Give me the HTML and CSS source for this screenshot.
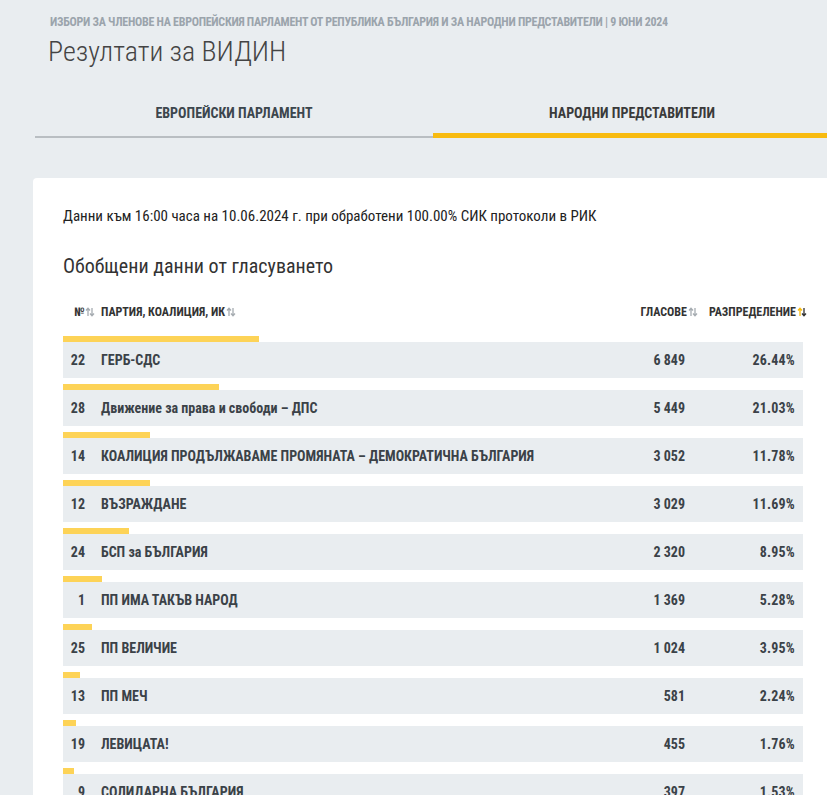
FILE: index.html
```html
<!DOCTYPE html>
<html lang="bg">
<head>
<meta charset="utf-8">
<title>Резултати за ВИДИН</title>
<link rel="stylesheet" href="styles.css">
</head>
<body>
<div class="page">
  <header class="head">
    <div class="sup">ИЗБОРИ ЗА ЧЛЕНОВЕ НА ЕВРОПЕЙСКИЯ ПАРЛАМЕНТ ОТ РЕПУБЛИКА БЪЛГАРИЯ И ЗА НАРОДНИ ПРЕДСТАВИТЕЛИ | 9 ЮНИ 2024</div>
    <h1 class="title">Резултати за ВИДИН</h1>
  </header>
  <nav class="tabs">
    <div class="tab">ЕВРОПЕЙСКИ ПАРЛАМЕНТ</div>
    <div class="tab active">НАРОДНИ ПРЕДСТАВИТЕЛИ</div>
  </nav>
  <section class="card">
    <p class="info">Данни към 16:00 часа на 10.06.2024 г. при обработени 100.00% СИК протоколи в РИК</p>
    <h2 class="sub">Обобщени данни от гласуването</h2>
    <div class="thead">
      <div class="th num">№<svg class="sort" viewBox="0 0 10 10"><path d="M3 9V1.5M1 3.5L3 1.2L5 3.5" class="up"/><path d="M7 1V8.5M5 6.5L7 8.8L9 6.5" class="dn"/></svg></div>
      <div class="th name">ПАРТИЯ, КОАЛИЦИЯ, ИК<svg class="sort" viewBox="0 0 10 10"><path d="M3 9V1.5M1 3.5L3 1.2L5 3.5" class="up"/><path d="M7 1V8.5M5 6.5L7 8.8L9 6.5" class="dn"/></svg></div>
      <div class="th votes">ГЛАСОВЕ<svg class="sort" viewBox="0 0 10 10"><path d="M3 9V1.5M1 3.5L3 1.2L5 3.5" class="up"/><path d="M7 1V8.5M5 6.5L7 8.8L9 6.5" class="dn"/></svg></div>
      <div class="th pct">РАЗПРЕДЕЛЕНИЕ<svg class="sort on" viewBox="0 0 10 10"><path d="M3 9V1.5M1 3.5L3 1.2L5 3.5" class="up"/><path d="M7 1V8.5M5 6.5L7 8.8L9 6.5" class="dn"/></svg></div>
    </div>
    <div class="rows">
      <div class="item"><div class="bar" style="width:26.44%"></div><div class="row"><span class="c-num">22</span><span class="c-name">ГЕРБ-СДС</span><span class="c-votes">6 849</span><span class="c-pct">26.44%</span></div></div>
      <div class="item"><div class="bar" style="width:21.03%"></div><div class="row"><span class="c-num">28</span><span class="c-name">Движение за права и свободи – ДПС</span><span class="c-votes">5 449</span><span class="c-pct">21.03%</span></div></div>
      <div class="item"><div class="bar" style="width:11.78%"></div><div class="row"><span class="c-num">14</span><span class="c-name">КОАЛИЦИЯ ПРОДЪЛЖАВАМЕ ПРОМЯНАТА – ДЕМОКРАТИЧНА БЪЛГАРИЯ</span><span class="c-votes">3 052</span><span class="c-pct">11.78%</span></div></div>
      <div class="item"><div class="bar" style="width:11.69%"></div><div class="row"><span class="c-num">12</span><span class="c-name">ВЪЗРАЖДАНЕ</span><span class="c-votes">3 029</span><span class="c-pct">11.69%</span></div></div>
      <div class="item"><div class="bar" style="width:8.95%"></div><div class="row"><span class="c-num">24</span><span class="c-name">БСП за БЪЛГАРИЯ</span><span class="c-votes">2 320</span><span class="c-pct">8.95%</span></div></div>
      <div class="item"><div class="bar" style="width:5.28%"></div><div class="row"><span class="c-num">1</span><span class="c-name">ПП ИМА ТАКЪВ НАРОД</span><span class="c-votes">1 369</span><span class="c-pct">5.28%</span></div></div>
      <div class="item"><div class="bar" style="width:3.95%"></div><div class="row"><span class="c-num">25</span><span class="c-name">ПП ВЕЛИЧИЕ</span><span class="c-votes">1 024</span><span class="c-pct">3.95%</span></div></div>
      <div class="item"><div class="bar" style="width:2.24%"></div><div class="row"><span class="c-num">13</span><span class="c-name">ПП МЕЧ</span><span class="c-votes">581</span><span class="c-pct">2.24%</span></div></div>
      <div class="item"><div class="bar" style="width:1.76%"></div><div class="row"><span class="c-num">19</span><span class="c-name">ЛЕВИЦАТА!</span><span class="c-votes">455</span><span class="c-pct">1.76%</span></div></div>
      <div class="item"><div class="bar" style="width:1.53%"></div><div class="row"><span class="c-num">9</span><span class="c-name">СОЛИДАРНА БЪЛГАРИЯ</span><span class="c-votes">397</span><span class="c-pct">1.53%</span></div></div>
    </div>
  </section>
</div>
</body>
</html>
```

FILE: styles.css
```css
html, body {
  margin: 0;
  padding: 0;
  overflow: hidden;
}
body {
  background: #e9edf0;
  font-family: "Roboto Condensed", Roboto, "Liberation Sans", sans-serif;
  font-stretch: condensed;
  color: #333;
  width: 827px;
  height: 795px;
}
.page {
  width: 800px;
  padding-left: 33px;
}
.head {
  padding: 15px 0 0 15px;
}
.sup {
  font-size: 12px;
  font-weight: 700;
  color: #9ba4ac;
  line-height: 14px;
  letter-spacing: -0.28px;
  padding-left: 2px;
  white-space: nowrap;
}
.title {
  margin: 6px 0 0 0;
  font-size: 28px;
  font-weight: 300;
  color: #444;
  line-height: 34px;
}
.tabs {
  display: flex;
  margin: 33px 0 0 2px;
  width: 796px;
}
.tab {
  flex: 1;
  text-align: center;
  font-size: 14px;
  font-weight: 700;
  color: #3c464d;
  height: 36px;
  line-height: 22px;
  border-bottom: 2px solid #b9bec2;
  box-sizing: border-box;
}
.tab.active {
  border-bottom: 5px solid #f8bb10;
  color: #3a3a3a;
}
.card {
  margin-top: 40px;
  background: #fff;
  border-radius: 4px;
  padding: 28px 30px 30px;
}
.info {
  margin: 0;
  font-size: 15px;
  line-height: 20px;
  color: #222;
}
.sub {
  margin: 28px 0 0 0;
  font-size: 20px;
  font-weight: 400;
  line-height: 24px;
  color: #333;
}
.thead {
  display: flex;
  align-items: center;
  margin-top: 24px;
  height: 20px;
  font-size: 12px;
  font-weight: 700;
  color: #333;
}
.th {
  display: flex;
  align-items: center;
  white-space: nowrap;
}
.th.num {
  padding-left: 11px;
  width: 27px;
}
.th.name {
  flex: 1;
}
.th.votes {
  justify-content: flex-end;
  margin-right: 11px;
}
.th.pct {
  justify-content: flex-end;
  margin-right: -4px;
}
.sort {
  width: 10px;
  height: 10px;
  margin-left: 1px;
  fill: none;
  stroke-width: 1.3;
}
.sort .up, .sort .dn {
  stroke: #a6acb1;
}
.sort.on .up {
  stroke: #f8bb10;
}
.sort.on .dn {
  stroke: #333;
}
.rows {
  margin-top: 14px;
}
.item {
  padding-bottom: 6px;
}
.bar {
  height: 6px;
  background: #fdd357;
}
.row {
  display: flex;
  align-items: center;
  height: 36px;
  background: #e9edf0;
  font-size: 14px;
  font-weight: 700;
  color: #3b4248;
  white-space: nowrap;
}
.c-num {
  width: 38px;
  box-sizing: border-box;
  padding-right: 16px;
  text-align: right;
}
.c-name {
  flex: 1;
}
.c-votes {
  width: 80px;
  text-align: right;
  margin-right: 0;
}
.c-pct {
  width: 110px;
  text-align: right;
  margin-right: 8px;
  letter-spacing: 0.2px;
}
```
